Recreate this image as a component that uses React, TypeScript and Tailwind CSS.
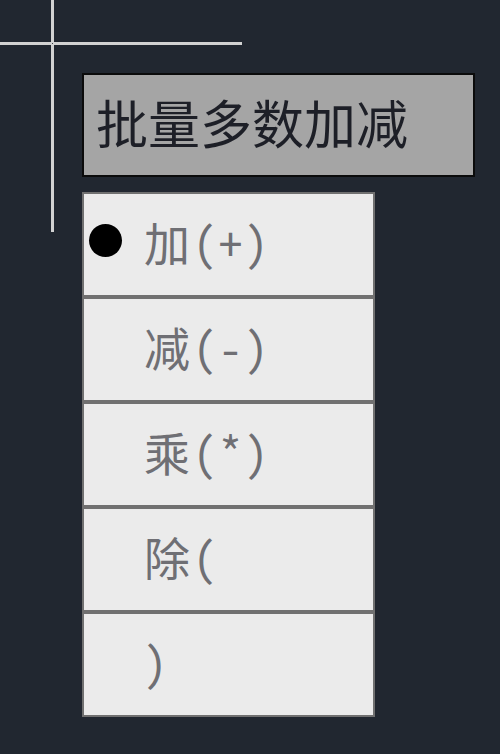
import React from "react";

const cjk = "font-['Noto_Sans_CJK_SC','Noto_Sans_CJK_JP',sans-serif]";

const options = [
  { label: "加(+)", active: true },
  { label: "减(-)", active: false },
  { label: "乘(*)", active: false },
  { label: "除(", active: false },
  { label: ")", active: false },
];

function Crosshair() {
  return (
    <div className="pointer-events-none absolute inset-0" aria-hidden="true">
      <div className="absolute left-0 top-[42px] h-[3px] w-[242px] bg-[#d2d2d2]" />
      <div className="absolute left-[51px] top-0 h-[232px] w-[3px] bg-[#d2d2d2]" />
      <div className="absolute left-[52px] top-[43px] h-[1px] w-[1px] bg-[#3a3f46]" />
    </div>
  );
}

export default function App() {
  return (
    <div className={`relative min-h-[754px] w-full overflow-hidden bg-[#212730] ${cjk}`}>
      <Crosshair />
      <div className="flex flex-col pl-[82px] pt-[73px]">
        <div className="flex h-[104px] w-[393px] items-center border-2 border-[#0b0b0b] bg-[#a5a5a5] pb-[6px] pl-[12px]">
          <span className="text-[52px] leading-none text-[#1d1f27]">
            批量多数加减
          </span>
        </div>

        <ul className="mt-[15px] flex w-[293px] flex-col">
          {options.map((opt) => (
            <li
              key={opt.label}
              className="relative flex h-[105px] items-center border-2 border-[#707070] bg-[#ebebeb] pb-[8px] pl-[60px]"
            >
              {opt.active && (
                <span className="absolute left-[5px] top-[30px] h-[33px] w-[33px] rounded-full bg-black" />
              )}
              <span className="text-[46px] leading-none tracking-[3px] text-[#6f6f74] [font-feature-settings:'hwid']">
                {opt.label}
              </span>
            </li>
          ))}
        </ul>
      </div>
    </div>
  );
}
